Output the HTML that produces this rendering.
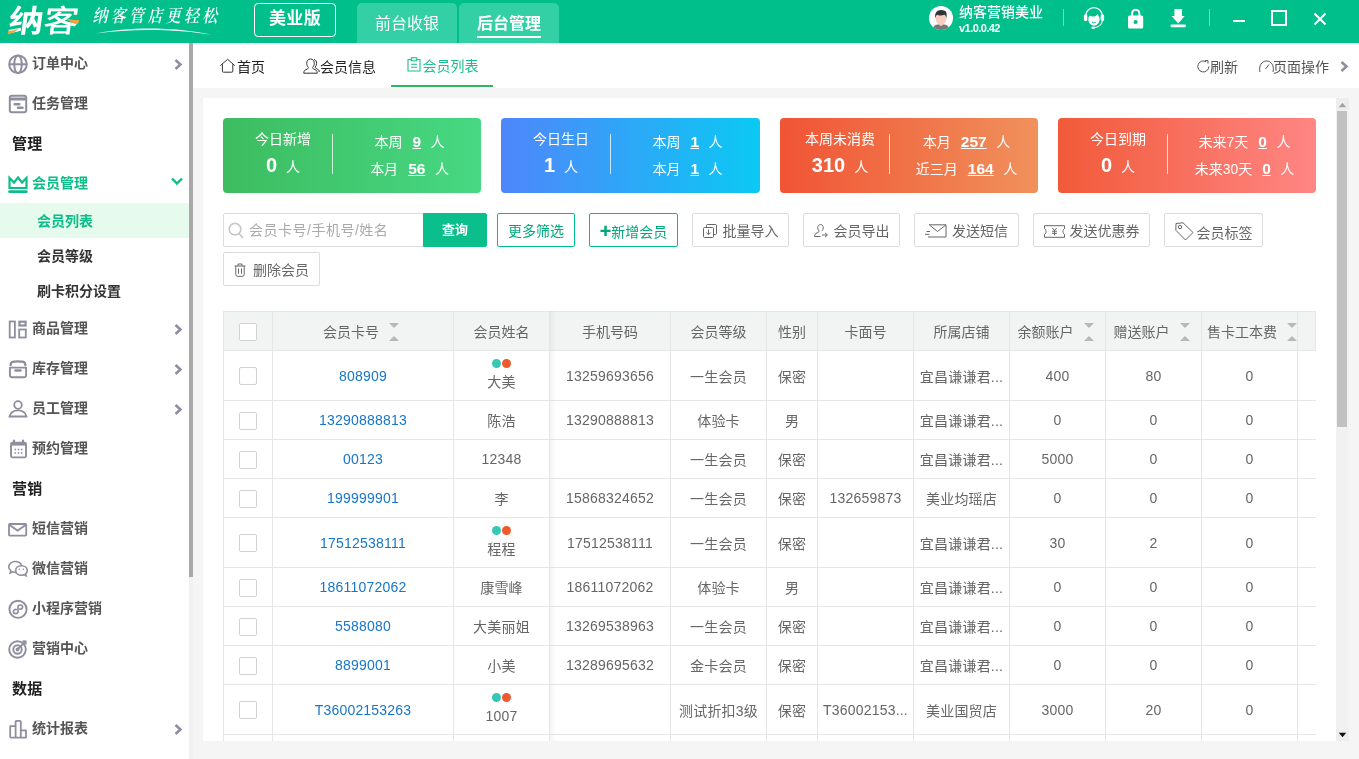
<!DOCTYPE html>
<html lang="zh-CN">
<head>
<meta charset="utf-8">
<title>纳客 会员列表</title>
<style>
*{box-sizing:border-box;margin:0;padding:0}
html,body{width:1359px;height:759px;overflow:hidden;background:#f5f5f5}
body{will-change:transform}
body{font-family:"Liberation Sans","Noto Sans CJK SC",sans-serif;font-size:14px;color:#555;position:relative}
.abs{position:absolute}
#top{position:absolute;left:0;top:0;width:1359px;height:43px;background:#00bf8b}
#logo{position:absolute;left:9px;top:-3px;font-size:31px;font-weight:700;color:#fff;letter-spacing:0;transform-origin:0 50%;transform:scaleX(1.13) skewX(-7deg);line-height:44px;font-family:"Noto Sans CJK SC",sans-serif}
#slogan{position:absolute;left:94px;top:4px;font-size:15px;color:#fff;font-family:"Noto Serif CJK SC",serif;letter-spacing:3.3px;line-height:22px;font-weight:600;transform:skewX(-12deg) scaleY(1.18);white-space:nowrap}
#ver{position:absolute;left:254px;top:3px;width:82px;height:34px;border:1px solid #fff;border-radius:4px;color:#fff;font-size:17px;font-weight:bold;text-align:center;line-height:30px;letter-spacing:.4px}
.ttab{position:absolute;top:3px;height:40px;width:100px;background:#33d0a5;border-radius:5px 5px 0 0;color:#fff;font-size:16px;text-align:center;line-height:41px}
#uname{position:absolute;left:959px;top:3px;color:#fff;font-size:14px;font-weight:500;line-height:18px;white-space:nowrap}
#uver{position:absolute;left:959px;top:21px;color:#fff;font-size:11px;font-weight:bold;line-height:14px;letter-spacing:-.55px}
.vsep{position:absolute;top:9px;width:1px;height:17px;background:#6fdcbd}
#side{position:absolute;left:0;top:43px;width:189px;height:716px;background:#fff}
#sbar{position:absolute;left:189px;top:43px;width:4px;height:534px;background:#a9a9a9}
.mi{position:absolute;left:0;width:189px;height:40px;line-height:40px;font-weight:bold;font-size:14px;color:#555;padding-left:32px;white-space:nowrap}
.mi svg{position:absolute;left:8px;top:10px;width:20px;height:20px;overflow:visible}
.mh{position:absolute;left:12px;font-weight:bold;font-size:15px;color:#222;line-height:40px;height:40px;margin-top:1px;letter-spacing:.3px}
.ms{position:absolute;left:0;width:189px;height:35px;line-height:37px;font-weight:bold;font-size:14px;color:#333;padding-left:37px}
.chev{position:absolute;left:172px;top:14px;width:10px;height:12px}
#tabs{position:absolute;left:193px;top:43px;width:1166px;height:45px;background:#fff}
.pt{position:absolute;top:0;height:45px;line-height:46px;font-size:14px;color:#222;white-space:nowrap}
#panel{position:absolute;left:203px;top:98px;width:1132px;height:643px;background:#fff;overflow:hidden}
.card{position:absolute;top:118px;height:74px;border-radius:4px;color:#fff}
.card .l1{position:absolute;left:0;top:11px;width:120px;text-align:center;font-size:14px;line-height:20px}
.card .l2{position:absolute;left:0;top:34px;width:120px;text-align:center;font-size:14px;line-height:26px}
.card .l2 b{font-size:20px;margin-right:9px}
.card .dv{position:absolute;left:109px;top:16px;width:1px;height:40px;background:rgba(255,255,255,.75)}
.card .r{position:absolute;left:110px;width:153px;text-align:center;font-size:14px;line-height:22px;white-space:nowrap}
.card .r b{font-size:15.5px;text-decoration:underline;margin:0 9.5px 0 10px}
.btn{position:absolute;top:213px;height:34px;border:1px solid #dcdcdc;border-radius:2px;background:#fff;color:#666;font-size:14px;line-height:32px;padding-top:1px;text-align:center;white-space:nowrap}
.btn.g{border-color:#00bf8b;color:#00a97a}
table{position:absolute;left:223px;top:311px;border-collapse:collapse;table-layout:fixed;width:1093px}
td{letter-spacing:.2px}
td,th{border:1px solid #e6e6e6;text-align:center;font-weight:normal;font-size:14px;color:#666;white-space:nowrap;overflow:hidden;padding:0}
th{background:#f2f3f3;color:#666;font-size:14px}
.cb{display:inline-block;width:18px;height:18px;border:1px solid #d2d2d2;border-radius:2px;background:#fff;vertical-align:middle;position:relative;top:1px}
.lnk{color:#1776c9}
.nm{line-height:18px}
.dots{display:block;height:9px;line-height:9px;font-size:0;margin-top:1px}
.dots i{display:inline-block;width:9px;height:9px;border-radius:50%}
.d1{background:#35c9b5;margin-right:1px}.d2{background:#f0582e}
.nmt{display:block;line-height:22px;margin-top:3px}
.sort{display:inline-block;position:relative;width:14px;height:0;vertical-align:baseline;margin-left:10px}
.sort:before{content:"";position:absolute;left:0;top:-14px;border:5px solid transparent;border-top-color:#b8b8b8;border-bottom:0}
.sort:after{content:"";position:absolute;left:0;top:-1px;border:5px solid transparent;border-bottom-color:#b8b8b8;border-top:0}
</style>
</head>
<body>
<div id="top">
  <div id="logo">纳<span style="font-weight:500">客</span></div>
  <svg class="abs" style="left:7px;top:28px" width="13" height="7" viewBox="0 0 13 7"><path d="M0.8 3.2 C3.5 2.6 7.5 2.8 11.2 0.6 C9.5 3.5 5 6 1.5 6.2 C0.6 5.3 0.6 4.2 0.8 3.2Z" fill="#f6a23c"/></svg>
  <svg class="abs" style="left:66px;top:18px" width="14" height="7" viewBox="0 0 14 7"><path d="M0.5 0.8 C3 0.5 6 2.6 13 2 C13 4 12.5 5.6 11 6 C7 6 4 3.5 0.5 0.8Z" fill="#f6a23c"/></svg>
  <div id="slogan">纳客管店更轻松</div>
  <svg class="abs" style="left:95px;top:26px" width="120" height="10" viewBox="0 0 120 10"><path d="M1 7.4 C35 0.6 80 0.8 117 8.8 C80 2.6 35 2.6 1 7.4Z" fill="#fff" opacity=".92"/></svg>
  <div id="ver">美业版</div>
  <div class="ttab" style="left:357px">前台收银</div>
  <div class="ttab" style="left:459px;font-weight:bold"><span style="display:inline-block;line-height:22px;border-bottom:2px solid #fff;padding-bottom:1px">后台管理</span></div>
  <svg class="abs" style="left:929px;top:6px" width="24" height="24" viewBox="0 0 24 24"><defs><clipPath id="avc"><circle cx="12" cy="12" r="12"/></clipPath></defs><circle cx="12" cy="12" r="12" fill="#fff"/><g clip-path="url(#avc)"><path d="M3.6 25 C3.6 19 7 18.2 12 18.2 C17 18.2 20.4 19 20.4 25Z" fill="#777"/><path d="M9.8 16 H14.2 V18.4 L12 20.2 L9.8 18.4Z" fill="#f8cdc0"/><ellipse cx="12" cy="13" rx="5.3" ry="5.8" fill="#f8cdc0"/><path d="M6.4 12.5 C5.2 7 8 4 12 4 C15 4 16.8 5 17.2 6.2 C18 8.5 17.6 11 17.2 12.5 C17 10.5 16.4 9.3 15.4 8.8 C12.5 10 9.5 9.4 8.2 8.8 C7 9.8 6.6 11 6.4 12.5Z" fill="#333"/></g></svg>
  <div id="uname">纳客营销美业</div>
  <div id="uver">v1.0.0.42</div>
  <div class="vsep" style="left:1063px"></div>
  <!-- headset -->
  <svg class="abs" style="left:1083px;top:6px" width="22" height="24" viewBox="0 0 22 24"><path d="M2.6 11 C2.6 -1.5 19.4 -1.5 19.4 11" fill="none" stroke="#fff" stroke-width="1.2"/><rect x="0.9" y="8.2" width="3.4" height="7" rx="1.6" fill="#fff"/><rect x="17.7" y="8.2" width="3.4" height="7" rx="1.6" fill="#fff"/><path d="M5.4 12.2 C6 9.5 7.5 9.3 8.3 10.2 C10 11 13 10.5 14.8 8 C15.3 9.8 16 10.8 16.6 12 C17.3 16.5 14 19.6 11 19.6 C8 19.6 4.8 16.5 5.4 12.2Z" fill="#fff"/><path d="M8.8 16.2 Q11 17.8 13.2 16.2" fill="none" stroke="#00bf8b" stroke-width="0.9"/><path d="M19.4 14.5 C19 19 15 21.3 11 21.6" fill="none" stroke="#fff" stroke-width="1.1"/><ellipse cx="10.3" cy="21.7" rx="1.9" ry="1.3" fill="#fff"/></svg>
  <!-- lock -->
  <svg class="abs" style="left:1127px;top:8px" width="17" height="21" viewBox="0 0 17 21"><path d="M5.1 9 V5.6 C5.1 0.4 12.4 0.4 12.4 5.6 V9" fill="none" stroke="#fff" stroke-width="1.9"/><rect x="1" y="7.4" width="15.2" height="13.2" rx="1.6" fill="#fff"/><circle cx="8.6" cy="14" r="2.1" fill="#00bf8b"/></svg>
  <!-- download -->
  <svg class="abs" style="left:1170px;top:9px" width="17" height="19" viewBox="0 0 17 19"><path d="M4.4 1 Q4.4 -0.1 5.4 -0.1 H11 Q12 -0.1 12 1 V6.9 H14.7 L8.2 14.4 L1.5 6.9 H4.4Z" fill="#fff"/><rect x="0.5" y="15.4" width="15.4" height="2.9" rx="1.2" fill="#fff"/></svg>
  <div class="vsep" style="left:1209px"></div>
  <div class="abs" style="left:1233px;top:20px;width:12px;height:2px;background:#fff"></div>
  <div class="abs" style="left:1271px;top:10px;width:16px;height:16px;border:2px solid #fff"></div>
  <svg class="abs" style="left:1313px;top:12px" width="14" height="14" viewBox="0 0 14 14"><path d="M1.5 1.5 L12.5 12.5 M12.5 1.5 L1.5 12.5" stroke="#fff" stroke-width="2" fill="none"/></svg>
</div>
<div id="side">
  <div class="mi" style="top:0"><svg viewBox="0 0 20 20"><g fill="none" stroke="#8e8e9f" stroke-width="2"><circle cx="10" cy="11.3" r="8.8"/><ellipse cx="10" cy="11.3" rx="3.8" ry="8.8"/><path d="M1 11.3 H19"/></g></svg>订单中心<svg class="chev" style="left:174px;top:16px;width:9px;height:11px" viewBox="0 0 9 11"><path d="M1.5 1 L6.5 5.5 L1.5 10" fill="none" stroke="#8e8e9f" stroke-width="2.5"/></svg></div>
  <div class="mi" style="top:40px"><svg viewBox="0 0 20 20"><g fill="none" stroke="#8e8e9f" stroke-width="2"><rect x="1.8" y="2.8" width="16.4" height="16.4" rx="2"/><path d="M2 6 H18" stroke-width="3"/><path d="M6.8 11.3 H11.3 M10 14.8 H14.5" stroke-width="2.6" stroke-linecap="round"/></g></svg>任务管理</div>
  <div class="mh" style="top:80px">管理</div>
  <div class="mi" style="top:120px;color:#0cbd88"><svg viewBox="0 0 20 20"><path d="M1.5 15 V5 L6 9.5 L10 4.5 L14 9.5 L18.5 5 V15Z" fill="none" stroke="#0cbd88" stroke-width="2.2"/><path d="M1.6 18.7 H18.4" stroke="#0cbd88" stroke-width="2.8" stroke-linecap="round"/></svg>会员管理<svg class="chev" style="left:171px;top:14px;width:12px;height:9px" viewBox="0 0 12 9"><path d="M1 1.5 L6 6.5 L11 1.5" fill="none" stroke="#0cbd88" stroke-width="2.4"/></svg></div>
  <div class="ms" style="top:160px;background:#e6fbee;color:#0cbd88">会员列表</div>
  <div class="ms" style="top:195px">会员等级</div>
  <div class="ms" style="top:230px">刷卡积分设置</div>
  <div class="mi" style="top:265px"><svg viewBox="0 0 20 20"><g fill="none" stroke="#8e8e9f" stroke-width="1.8"><rect x="1.7" y="3.5" width="5.2" height="16"/><rect x="11.4" y="3.7" width="6.2" height="3.8" stroke-width="2.2"/><rect x="11.2" y="11.5" width="6.6" height="8"/></g></svg>商品管理<svg class="chev" style="left:174px;top:16px;width:9px;height:11px" viewBox="0 0 9 11"><path d="M1.5 1 L6.5 5.5 L1.5 10" fill="none" stroke="#8e8e9f" stroke-width="2.5"/></svg></div>
  <div class="mi" style="top:305px"><svg viewBox="0 0 20 20"><g fill="none" stroke="#8e8e9f" stroke-width="2"><path d="M2.6 7 C2.6 3.6 5 3.4 10 3.4 C15 3.4 17.4 3.6 17.4 7" stroke-width="2.4" stroke-linecap="round"/><path d="M1.9 9 V17 Q1.9 19.2 4.1 19.2 H15.9 Q18.1 19.2 18.1 17 V9 M1.9 9.6 H18.1" stroke-width="1.9"/><path d="M7.5 12.5 H12.5" stroke-width="2.4" stroke-linecap="round"/></g></svg>库存管理<svg class="chev" style="left:174px;top:16px;width:9px;height:11px" viewBox="0 0 9 11"><path d="M1.5 1 L6.5 5.5 L1.5 10" fill="none" stroke="#8e8e9f" stroke-width="2.5"/></svg></div>
  <div class="mi" style="top:345px"><svg viewBox="0 0 20 20"><g fill="none" stroke="#8e8e9f" stroke-width="1.8"><circle cx="10" cy="7" r="3.8"/><path d="M1.5 18.5 C3 12.5 7 12.3 10 12.3 C13 12.3 17 12.5 18.5 18.5Z"/></g></svg>员工管理<svg class="chev" style="left:174px;top:16px;width:9px;height:11px" viewBox="0 0 9 11"><path d="M1.5 1 L6.5 5.5 L1.5 10" fill="none" stroke="#8e8e9f" stroke-width="2.5"/></svg></div>
  <div class="mi" style="top:385px"><svg viewBox="0 0 20 20"><g fill="none" stroke="#8e8e9f" stroke-width="1.9"><rect x="3" y="4.8" width="15" height="14.6" rx="1.5"/><path d="M3 6 H18" stroke-width="3.2"/><path d="M6 2.6 V5 M15 2.6 V5" stroke-width="2.2" stroke-linecap="round"/><path d="M6.5 11.5 h1.6 M9.7 11.5 h1.6 M12.9 11.5 h1.6 M6.5 15 h1.6 M9.7 15 h1.6 M12.9 15 h1.6" stroke-width="1.6"/></g></svg>预约管理</div>
  <div class="mh" style="top:425px">营销</div>
  <div class="mi" style="top:465px"><svg viewBox="0 0 20 20"><g fill="none" stroke="#8e8e9f" stroke-width="1.8"><rect x="1" y="6" width="17.2" height="11.6" rx="0.8"/><path d="M1.5 7 L9.6 12.6 L17.7 7"/></g></svg>短信营销</div>
  <div class="mi" style="top:505px"><svg viewBox="0 0 20 20"><g fill="none" stroke="#8e8e9f" stroke-width="1.6"><path d="M8 14.5 C6.5 14.5 5.5 14.2 4.6 13.8 L2.2 15 L2.8 12.6 C1.3 11.5 0.7 10.2 0.7 8.8 C0.7 5.8 3.6 3.5 7.2 3.5 C10.3 3.5 12.8 5.2 13.5 7.5"/><path d="M13.5 7.7 C16.8 7.7 19.3 9.8 19.3 12.5 C19.3 13.8 18.7 15 17.6 15.8 L18.1 17.8 L16 16.8 C15.2 17.1 14.4 17.3 13.5 17.3 C10.2 17.3 7.7 15.2 7.7 12.5 C7.7 9.8 10.2 7.7 13.5 7.7Z"/><path d="M11.3 11.2 h0.1 M15.4 11.2 h0.1" stroke-width="1.6" stroke-linecap="round"/></g></svg>微信营销</div>
  <div class="mi" style="top:545px"><svg viewBox="0 0 20 20"><g fill="none" stroke="#8e8e9f" stroke-width="1.9"><circle cx="10" cy="11.3" r="8.6"/><path d="M10 13.2 V9 C10 6.3 14.6 6.3 14.6 9 C14.6 10.6 13 11.3 11.8 11.1 M10 9.5 V13.6 C10 16.3 5.4 16.3 5.4 13.6 C5.4 12 7 11.3 8.2 11.5" stroke-width="1.7" stroke-linecap="round"/></g></svg>小程序营销</div>
  <div class="mi" style="top:585px"><svg viewBox="0 0 20 20"><g fill="none" stroke="#8e8e9f" stroke-width="1.9"><circle cx="9.5" cy="11.5" r="8.3"/><circle cx="9.5" cy="11.5" r="4.2"/><circle cx="9.5" cy="11.5" r="1" fill="#8e8e9f"/><path d="M9.5 11.5 L17.3 3.7 M14.6 3.2 L17.6 3.4 L17.8 6.4" stroke-width="1.8"/></g></svg>营销中心</div>
  <div class="mh" style="top:625px">数据</div>
  <div class="mi" style="top:665px"><svg viewBox="0 0 20 20"><g fill="none" stroke="#8e8e9f" stroke-width="1.8" stroke-linejoin="round"><path d="M2.2 19.6 V8.2 H7.6 V19.6 M7.6 8.2 V3.9 Q7.6 2.9 8.6 2.9 H11.8 Q12.8 2.9 12.8 3.9 V19.6 M12.8 12.4 H18 V19.6 H2.2"/></g></svg>统计报表<svg class="chev" style="left:174px;top:16px;width:9px;height:11px" viewBox="0 0 9 11"><path d="M1.5 1 L6.5 5.5 L1.5 10" fill="none" stroke="#8e8e9f" stroke-width="2.5"/></svg></div>
</div>
<div class="abs" style="left:189px;top:43px;width:4px;height:716px;background:#f1f1f1"></div>
<div id="sbar"></div>
<div class="abs" style="left:193px;top:43px;width:1166px;height:2px;background:#f3f3f3"></div>
<div id="tabs" style="top:45px;height:43px">
  <div class="pt" style="left:27px;top:-1px"><svg class="abs" style="left:0;top:14px" width="16" height="16" viewBox="0 0 16 16"><path d="M0.4 7.6 L7.6 1.3 L14.8 7.6 M2.4 6.2 V13.2 Q2.4 14.2 3.4 14.2 H11.8 Q12.8 14.2 12.8 13.2 V6.2" fill="none" stroke="#333" stroke-width="1"/></svg><span style="margin-left:17px">首页</span></div>
  <div class="pt" style="left:110px;top:-1px"><svg class="abs" style="left:0;top:14px" width="17" height="17" viewBox="0 0 17 17"><g fill="none" stroke="#333" stroke-width="1"><path d="M7.5 1 C10 1 11.3 3 11.3 5.3 C11.3 7.2 10.5 8.6 9.6 9.4 C9.6 10.5 10.5 11 12 11.6 C13.5 12.2 14.2 13 14.2 15.2 H0.8 C0.8 13 1.5 12.2 3 11.6 C4.5 11 5.4 10.5 5.4 9.4 C4.5 8.6 3.7 7.2 3.7 5.3 C3.7 3 5 1 7.5 1Z"/><path d="M11 1.5 C12.8 1.8 13.6 3.5 13.6 5.3 C13.6 7 13 8.2 12.2 9 C12.2 10 13 10.5 14.2 11 C15.4 11.5 16.3 12.3 16.3 14"/></g></svg><span style="margin-left:17px">会员信息</span></div>
  <div class="pt" style="left:214px;top:-2px;color:#1bbf8e"><svg class="abs" style="left:0;top:14px" width="14" height="15" viewBox="0 0 14 15"><g fill="none" stroke="#1bbf8e" stroke-width="1.1"><path d="M4 2.5 H1 V14 H13 V2.5 H10"/><rect x="4.3" y="0.8" width="5.4" height="3"/><path d="M4 7.3 H10 M4 10.3 H10"/></g></svg><span style="margin-left:15.5px">会员列表</span></div>
  <div class="abs" style="left:198px;top:40px;width:102px;height:2px;background:#2db562"></div>
  <div class="pt" style="left:1004px;top:-1px;color:#555"><svg class="abs" style="left:0;top:16px" width="13" height="13" viewBox="0 0 13 13"><path d="M11.8 6.5 A5.5 5.5 0 1 1 9.2 1.8" fill="none" stroke="#555" stroke-width="1"/><path d="M8 0.6 H11 V3.6" fill="none" stroke="#555" stroke-width="1"/></svg><span style="margin-left:13px">刷新</span></div>
  <div class="pt" style="left:1066px;top:-1px;color:#555"><svg class="abs" style="left:0;top:16px" width="15" height="12" viewBox="0 0 15 12"><path d="M1 12 C-0.5 6 2.5 1 7.5 1 C12.5 1 15.5 6 14 12 M6.5 9 L10 4.5" fill="none" stroke="#555" stroke-width="1"/></svg><span style="margin-left:14px">页面操作</span></div>
  <svg class="abs" style="left:1147px;top:16px" width="9" height="11" viewBox="0 0 9 11"><path d="M1.5 1 L6.5 5.5 L1.5 10" fill="none" stroke="#8e8e9f" stroke-width="2.6"/></svg>
</div>
<div id="panel" style="width:1133px"></div>
<!-- scrollbar -->
<div class="abs" style="left:1336px;top:98px;width:13px;height:643px;background:#f1f1f1"></div>
<div class="abs" style="left:1336px;top:98px;width:13px;height:12px;background:#eeecec"></div>
<div class="abs" style="left:1336px;top:729px;width:13px;height:12px;background:#eeecec"></div>
<svg class="abs" style="left:1338px;top:102px" width="9" height="6" viewBox="0 0 9 6"><path d="M0.8 5.2 L4.5 0.8 L8.2 5.2Z" fill="#a3a3a3"/></svg>
<svg class="abs" style="left:1338px;top:732px" width="9" height="6" viewBox="0 0 9 6"><path d="M0.8 0.8 L4.5 5.2 L8.2 0.8Z" fill="#111"/></svg>
<div class="abs" style="left:1337px;top:111px;width:10px;height:316px;background:#c1c1c1"></div>

<div class="card" style="left:223px;width:258px;height:75px;background:linear-gradient(90deg,#3dbc60,#47d883)">
  <div class="l1">今日新增</div><div class="l2"><b>0</b>人</div><div class="dv"></div>
  <div class="r" style="top:13px">本周<b>9</b>人</div><div class="r" style="top:40px">本月<b>56</b>人</div>
</div>
<div class="card" style="left:501px;width:259px;height:75px;background:linear-gradient(90deg,#4f86fb,#0bc9f3)">
  <div class="l1">今日生日</div><div class="l2"><b>1</b>人</div><div class="dv"></div>
  <div class="r" style="top:13px">本周<b>1</b>人</div><div class="r" style="top:40px">本月<b>1</b>人</div>
</div>
<div class="card" style="left:780px;width:258px;height:75px;background:linear-gradient(90deg,#f05434,#f0915c)">
  <div class="l1">本周未消费</div><div class="l2"><b>310</b>人</div><div class="dv"></div>
  <div class="r" style="top:13px">本月<b>257</b>人</div><div class="r" style="top:40px">近三月<b>164</b>人</div>
</div>
<div class="card" style="left:1058px;width:258px;height:75px;background:linear-gradient(90deg,#f15a39,#ff8684)">
  <div class="l1">今日到期</div><div class="l2"><b>0</b>人</div><div class="dv"></div>
  <div class="r" style="top:13px">未来7天<b>0</b>人</div><div class="r" style="top:40px">未来30天<b>0</b>人</div>
</div>

<div class="btn" style="left:223px;width:201px;text-align:left;border-radius:2px 0 0 2px;color:#aaa;padding-left:25px;letter-spacing:.5px;line-height:33px;padding-top:0"><svg class="abs" style="left:4px;top:8px" width="16" height="17" viewBox="0 0 16 17"><circle cx="7" cy="7.2" r="5.8" fill="none" stroke="#c6c6c6" stroke-width="1.6"/><path d="M11 11.5 L15 16" stroke="#c6c6c6" stroke-width="1.7"/></svg>会员卡号/手机号/姓名</div>
<div class="btn" style="left:423px;width:64px;background:#0abf8b;border-color:#0abf8b;color:#fff;font-weight:bold;font-size:13px;border-radius:0 2px 2px 0;padding-top:0">查询</div>
<div class="btn g" style="left:497px;width:78px">更多筛选</div>
<div class="btn g" style="left:589px;width:89px"><b style="font-size:19px;font-weight:900;line-height:30px;vertical-align:-1.5px;font-family:'Noto Sans CJK SC',sans-serif">+</b>新增会员</div>
<div class="btn" style="left:692px;width:97px"><svg width="14" height="14" viewBox="0 0 14 14" style="vertical-align:-2px;margin-right:6px"><g fill="none" stroke="#666" stroke-width="1"><rect x="0.5" y="3.5" width="10" height="10" rx="1"/><path d="M3.5 3.5 V1.5 Q3.5 0.5 4.5 0.5 H12.5 Q13.5 0.5 13.5 1.5 V9.5 Q13.5 10.5 12.5 10.5 H10.5"/><path d="M5.5 5.5 V10.5 M3.3 8.5 L5.5 10.7 L7.7 8.5"/></g></svg>批量导入</div>
<div class="btn" style="left:803px;width:97px"><svg width="14" height="14" viewBox="0 0 14 14" style="vertical-align:-2px;margin-right:6px"><g fill="none" stroke="#666" stroke-width="1"><path d="M6.5 0.6 C8.3 0.6 9.3 2 9.3 3.8 C9.3 5.3 8.6 6.3 7.9 6.9 M5.1 6.9 C4.4 6.3 3.7 5.3 3.7 3.8 C3.7 2 4.7 0.6 6.5 0.6 M5.1 6.9 C5.1 8 4.2 8.4 3 8.9 C1.5 9.5 0.6 10.2 0.6 12.5 H6.5"/><path d="M8 11 H13.2 M11 8.8 L13.4 11 L11 13.2"/></g></svg>会员导出</div>
<div class="btn" style="left:914px;width:105px"><svg width="22" height="14" viewBox="0 0 22 14" style="vertical-align:-2px;margin-right:5px"><g fill="none" stroke="#666" stroke-width="1"><path d="M4 0.8 H21 V13 H3"/><path d="M4.5 1 L12.5 7.5 L20.8 1"/><path d="M1.5 7.5 H5 M0 10.3 H4.5"/></g></svg>发送短信</div>
<div class="btn" style="left:1033px;width:117px"><svg width="21" height="13" viewBox="0 0 21 13" style="vertical-align:-2px;margin-right:5px"><g fill="none" stroke="#666" stroke-width="1"><path d="M0.5 0.7 H20.5 V3.5 C18.5 4.5 18.5 8.5 20.5 9.5 V12.3 H0.5 V9.5 C2.5 8.5 2.5 4.5 0.5 3.5Z"/><path d="M8.3 3 L10.5 5.5 L12.7 3 M10.5 5.5 V10.3 M8 6.2 H13 M8 8.3 H13"/></g></svg>发送优惠券</div>
<div class="btn" style="left:1164px;width:99px;line-height:36px"><svg width="19" height="19" viewBox="0 0 19 19" style="vertical-align:-3px;margin-right:3px"><g fill="none" stroke="#666" stroke-width="1"><path d="M1 1.5 L8 0.8 L18 10.5 L10.5 18 L0.8 8.2Z" stroke-linejoin="round"/><circle cx="5" cy="5" r="1.7"/></g></svg>会员标签</div>
<div class="btn" style="left:223px;top:252px;width:97px"><svg width="12" height="14" viewBox="0 0 12 14" style="vertical-align:-2px;margin-right:7px"><g fill="none" stroke="#666" stroke-width="1"><path d="M0.5 3 H11.5 M4 3 V1 H8 V3 M1.8 3 V11.5 Q1.8 13.3 3.6 13.3 H8.4 Q10.2 13.3 10.2 11.5 V3"/><path d="M4.5 5.5 V10.8 M7.5 5.5 V10.8"/></g></svg>删除会员</div>

<div class="abs" style="left:223px;top:311px;width:1093px;height:430px;overflow:hidden">
<table style="left:0;top:0;width:1112px">
<colgroup><col style="width:49px"><col style="width:181px"><col style="width:96px"><col style="width:121px"><col style="width:96px"><col style="width:51px"><col style="width:96px"><col style="width:96px"><col style="width:96px"><col style="width:96px"><col style="width:96px"><col style="width:38px"></colgroup>
<tr style="height:39px"><th><span class="cb" style="position:relative;top:1px"></span></th><th>会员卡号<span class="sort"></span></th><th>会员姓名</th><th>手机号码</th><th>会员等级</th><th>性别</th><th>卡面号</th><th>所属店铺</th><th>余额账户<span class="sort"></span></th><th>赠送账户<span class="sort"></span></th><th style="text-align:left;padding-left:5px">售卡工本费<span class="sort"></span></th><th></th></tr>
<tr style="height:50px"><td><span class="cb" style="top:0"></span></td><td><a class="lnk">808909</a></td><td class="nm"><span class="dots"><i class="d1"></i><i class="d2"></i></span><span class="nmt">大美</span></td><td>13259693656</td><td>一生会员</td><td>保密</td><td></td><td>宜昌谦谦君...</td><td>400</td><td>80</td><td>0</td><td></td></tr>
<tr style="height:39px"><td><span class="cb"></span></td><td><a class="lnk">13290888813</a></td><td>陈浩</td><td>13290888813</td><td>体验卡</td><td>男</td><td></td><td>宜昌谦谦君...</td><td>0</td><td>0</td><td>0</td><td></td></tr>
<tr style="height:39px"><td><span class="cb"></span></td><td><a class="lnk">00123</a></td><td>12348</td><td></td><td>一生会员</td><td>保密</td><td></td><td>宜昌谦谦君...</td><td>5000</td><td>0</td><td>0</td><td></td></tr>
<tr style="height:39px"><td><span class="cb"></span></td><td><a class="lnk">199999901</a></td><td>李</td><td>15868324652</td><td>一生会员</td><td>保密</td><td>132659873</td><td>美业均瑶店</td><td>0</td><td>0</td><td>0</td><td></td></tr>
<tr style="height:50px"><td><span class="cb" style="top:0"></span></td><td><a class="lnk">17512538111</a></td><td class="nm"><span class="dots"><i class="d1"></i><i class="d2"></i></span><span class="nmt">程程</span></td><td>17512538111</td><td>一生会员</td><td>保密</td><td></td><td>宜昌谦谦君...</td><td>30</td><td>2</td><td>0</td><td></td></tr>
<tr style="height:39px"><td><span class="cb"></span></td><td><a class="lnk">18611072062</a></td><td>康雪峰</td><td>18611072062</td><td>体验卡</td><td>男</td><td></td><td>宜昌谦谦君...</td><td>0</td><td>0</td><td>0</td><td></td></tr>
<tr style="height:39px"><td><span class="cb"></span></td><td><a class="lnk">5588080</a></td><td>大美丽姐</td><td>13269538963</td><td>一生会员</td><td>保密</td><td></td><td>宜昌谦谦君...</td><td>0</td><td>0</td><td>0</td><td></td></tr>
<tr style="height:39px"><td><span class="cb"></span></td><td><a class="lnk">8899001</a></td><td>小美</td><td>13289695632</td><td>金卡会员</td><td>保密</td><td></td><td>宜昌谦谦君...</td><td>0</td><td>0</td><td>0</td><td></td></tr>
<tr style="height:50px"><td><span class="cb" style="top:0"></span></td><td><a class="lnk">T36002153263</a></td><td class="nm"><span class="dots"><i class="d1"></i><i class="d2"></i></span><span class="nmt">1007</span></td><td></td><td>测试折扣3级</td><td>保密</td><td>T36002153...</td><td>美业国贸店</td><td>3000</td><td>20</td><td>0</td><td></td></tr>
<tr style="height:39px"><td><span class="cb"></span></td><td><a class="lnk"></a></td><td></td><td></td><td></td><td></td><td></td><td></td><td></td><td></td><td></td><td></td></tr></table>
<div class="abs" style="left:327px;top:0;width:6px;height:430px;background:linear-gradient(90deg,rgba(0,0,0,.045),rgba(0,0,0,0))"></div>
<div class="abs" style="left:1092px;top:0;width:1px;height:40px;background:#e6e6e6"></div>
</div>
</body>
</html>
